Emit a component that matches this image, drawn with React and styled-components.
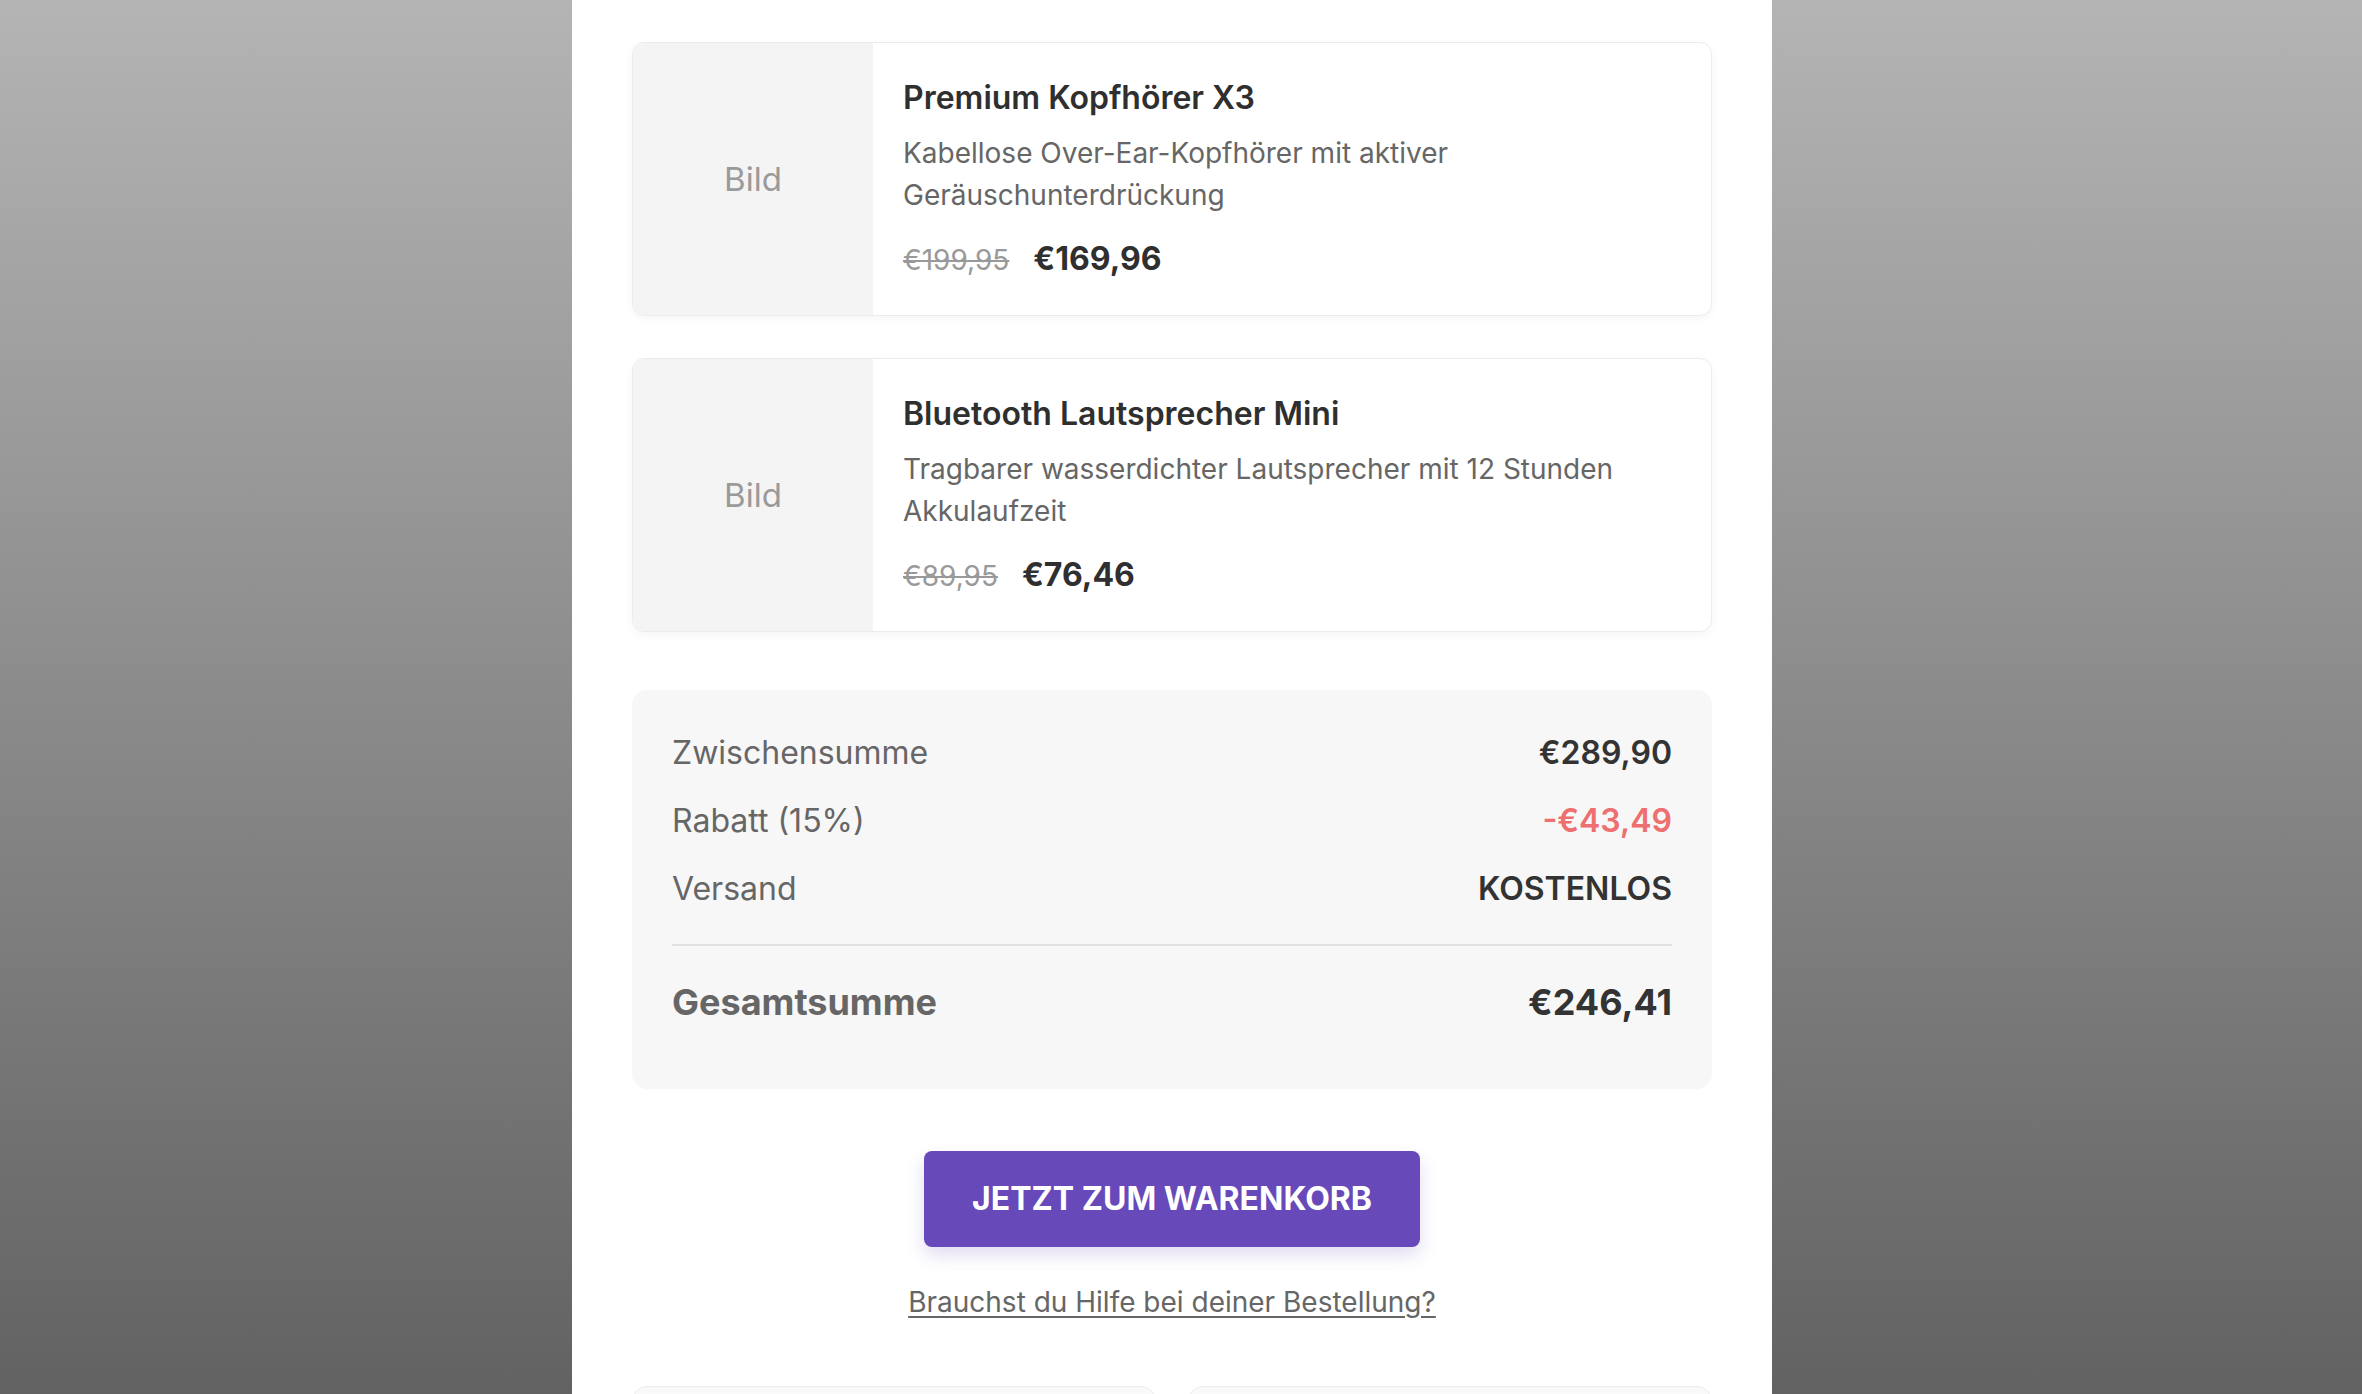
import React from "react";
import styled, { createGlobalStyle } from "styled-components";

const GlobalStyle = createGlobalStyle`
  html, body {
    margin: 0;
    padding: 0;
  }
  body {
    background: linear-gradient(to bottom, #b4b4b4 0%, #626262 100%);
    font-family: Inter, "Noto Sans", "Liberation Sans", sans-serif;
    -webkit-font-smoothing: antialiased;
  }
  * { box-sizing: border-box; }
`;

const Page = styled.div`
  height: 100vh;
  overflow: hidden;
  display: flex;
  justify-content: center;
  padding-right: 18px;
`;

const Column = styled.main`
  width: 1200px;
  flex-shrink: 0;
  background: #ffffff;
  padding: 0 60px;
  display: flex;
  flex-direction: column;
`;

const TopRule = styled.div`
  height: 2px;
  background: #ebebeb;
`;

const CardList = styled.section`
  margin-top: 42px;
  display: flex;
  flex-direction: column;
  gap: 42px;
`;

const Card = styled.article`
  display: flex;
  border: 1px solid #ececec;
  border-radius: 12px;
  overflow: hidden;
  background: #ffffff;
  box-shadow: 0 3px 10px rgba(0, 0, 0, 0.04);
`;

const ImageBox = styled.div`
  width: 240px;
  flex-shrink: 0;
  background: #f4f4f4;
  display: flex;
  align-items: center;
  justify-content: center;
  color: #9a9a9a;
  font-size: 33px;
`;

const Info = styled.div`
  flex: 1;
  padding: 35px 30px 36px 30px;
`;

const Title = styled.h3`
  margin: 0 0 14px 0;
  font-size: 32px;
  line-height: 40px;
  font-weight: 600;
  color: #2f2f2f;
`;

const Description = styled.p`
  margin: 0;
  font-size: 28px;
  line-height: 42px;
  color: #666666;
`;

const PriceRow = styled.div`
  margin-top: 23px;
  height: 40px;
  display: flex;
  align-items: baseline;
  gap: 24px;
`;

const OldPrice = styled.span`
  font-size: 28px;
  line-height: 28px;
  color: #999999;
  text-decoration: line-through;
`;

const NewPrice = styled.span`
  font-size: 32px;
  line-height: 40px;
  font-weight: 700;
  color: #2f2f2f;
`;

const Summary = styled.section`
  margin-top: 58px;
  background: #f7f7f7;
  border-radius: 15px;
  padding: 39px 40px 57px 40px;
`;

const SummaryRow = styled.div`
  display: flex;
  justify-content: space-between;
  align-items: baseline;
  font-size: 32px;
  line-height: 48px;
  & + & {
    margin-top: 20px;
  }
`;

const Label = styled.span`
  color: #666666;
`;

const Value = styled.span`
  font-weight: 600;
  color: ${(p) => (p.$discount ? "#ee6f6f" : "#333333")};
`;

const Divider = styled.hr`
  margin: 31px 0 0 0;
  border: none;
  height: 2px;
  background: #e0e0e0;
`;

const TotalRow = styled.div`
  margin-top: 28px;
  display: flex;
  justify-content: space-between;
  align-items: baseline;
  font-size: 36px;
  line-height: 57.6px;
  font-weight: 700;
`;

const TotalLabel = styled.span`
  color: #666666;
`;

const TotalValue = styled.span`
  color: #333333;
`;

const Actions = styled.div`
  margin-top: 62px;
  display: flex;
  flex-direction: column;
  align-items: center;
`;

const CartButton = styled.button`
  border: none;
  background: #6749b9;
  color: #ffffff;
  font-family: inherit;
  font-size: 32px;
  font-weight: 700;
  line-height: 48px;
  padding: 24px 48px;
  border-radius: 8px;
  text-transform: uppercase;
  box-shadow: 0 8px 18px rgba(103, 73, 185, 0.2);
  cursor: pointer;
`;

const HelpLink = styled.a`
  margin-top: 34px;
  font-size: 28px;
  line-height: 42px;
  color: #666666;
  text-decoration: underline;
  text-underline-offset: 4px;
  text-decoration-thickness: 2px;
`;

const BottomGrid = styled.section`
  margin-top: 63px;
  display: grid;
  grid-template-columns: 1fr 1fr;
  gap: 32px;
`;

const InfoTile = styled.div`
  height: 200px;
  border: 1px solid #ececec;
  border-radius: 15px;
  background: #f9f9f9;
`;

const products = [
  {
    title: "Premium Kopfhörer X3",
    description: "Kabellose Over-Ear-Kopfhörer mit aktiver Geräuschunterdrückung",
    oldPrice: "€199,95",
    price: "€169,96",
  },
  {
    title: "Bluetooth Lautsprecher Mini",
    description: "Tragbarer wasserdichter Lautsprecher mit 12 Stunden Akkulaufzeit",
    oldPrice: "€89,95",
    price: "€76,46",
  },
];

export default function App() {
  return (
    <>
      <GlobalStyle />
      <Page>
        <Column>
          <TopRule />
          <CardList>
            {products.map((p) => (
              <Card key={p.title}>
                <ImageBox>Bild</ImageBox>
                <Info>
                  <Title>{p.title}</Title>
                  <Description>{p.description}</Description>
                  <PriceRow>
                    <OldPrice>{p.oldPrice}</OldPrice>
                    <NewPrice>{p.price}</NewPrice>
                  </PriceRow>
                </Info>
              </Card>
            ))}
          </CardList>

          <Summary>
            <SummaryRow>
              <Label>Zwischensumme</Label>
              <Value>€289,90</Value>
            </SummaryRow>
            <SummaryRow>
              <Label>Rabatt (15%)</Label>
              <Value $discount>-€43,49</Value>
            </SummaryRow>
            <SummaryRow>
              <Label>Versand</Label>
              <Value>KOSTENLOS</Value>
            </SummaryRow>
            <Divider />
            <TotalRow>
              <TotalLabel>Gesamtsumme</TotalLabel>
              <TotalValue>€246,41</TotalValue>
            </TotalRow>
          </Summary>

          <Actions>
            <CartButton>Jetzt zum Warenkorb</CartButton>
            <HelpLink href="#">Brauchst du Hilfe bei deiner Bestellung?</HelpLink>
          </Actions>

          <BottomGrid>
            <InfoTile />
            <InfoTile />
          </BottomGrid>
        </Column>
      </Page>
    </>
  );
}
